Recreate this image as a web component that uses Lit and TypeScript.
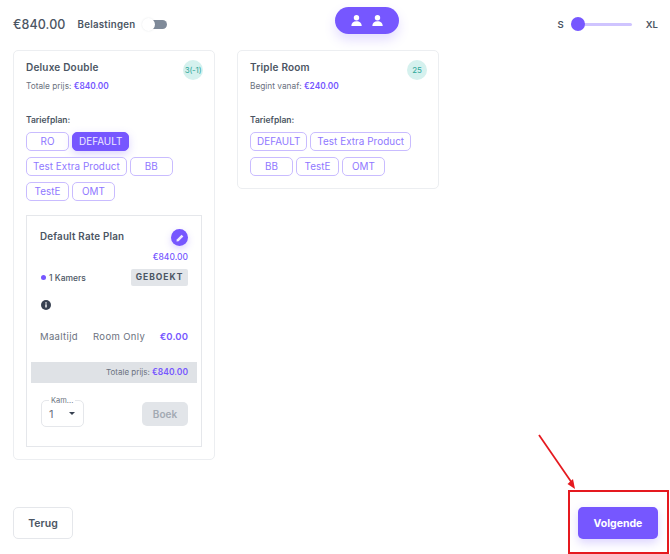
import { LitElement, html, css, svg } from 'lit';
import { customElement } from 'lit/decorators.js';

const personIcon = svg`<circle cx="5.500" cy="2.800" r="2.700"/><path d="M.3 11c0-3 2.100-4.700 5.200-4.700s5.200 1.700 5.200 4.700z"/>`;

@customElement('room-card')
export class RoomCard extends LitElement {
  static properties = {
    name: { type: String },
    label: { type: String },
    price: { type: String },
    badge: { type: String },
    plans: { type: Array },
    active: { type: String },
  };

  name = '';
  label = '';
  price = '';
  badge = '';
  plans: string[] = [];
  active = '';

  static styles = css`
    :host {
      display: block;
      width: 202px;
      box-sizing: border-box;
      border: 1px solid #eceef1;
      border-radius: 5px;
      background: #fff;
      padding: 9px 12px 12px;
    }
    .top {
      display: flex;
      justify-content: space-between;
      align-items: flex-start;
    }
    .name {
      font-size: 10px;
      font-weight: 600;
      color: #4b5563;
      line-height: 14px;
      letter-spacing: 0.2px;
    }
    .badge {
      width: 20px;
      height: 20px;
      border-radius: 50%;
      background: #d5f1ee;
      color: #2fa89b;
      font-size: 8px;
      letter-spacing: -0.2px;
      display: flex;
      align-items: center;
      justify-content: center;
      margin-right: -1px;
      white-space: nowrap;
    }
    .total {
      font-size: 8.3px;
      line-height: 12px;
      color: #6b7280;
    }
    .total b {
      color: #7657ff;
      font-weight: 600;
    }
    .plan-label {
      font-size: 8.5px;
      font-weight: 600;
      color: #4b5563;
      line-height: 12px;
      margin-top: 22px;
      margin-bottom: 6px;
    }
    .plans {
      display: flex;
      flex-wrap: wrap;
      gap: 6px 3px;
    }
    .plan {
      box-sizing: border-box;
      min-width: 43px;
      height: 19px;
      padding: 0 6px;
      border: 1px solid #c9bcff;
      border-radius: 5px;
      background: #fff;
      color: #8f78ff;
      font: 400 9.9px/17px Inter, sans-serif;
      letter-spacing: 0.05px;
      text-align: center;
    }
    .plan.on {
      background: #7657ff;
      border-color: #7657ff;
      color: #eee9ff;
      box-shadow: 0 3px 8px rgba(118, 87, 255, 0.25);
    }
  `;

  render() {
    return html`
      <div class="top">
        <div class="name">${this.name}</div>
        <div class="badge">${this.badge}</div>
      </div>
      <div class="total">${this.label} <b>${this.price}</b></div>
      <div class="plan-label">Tariefplan:</div>
      <div class="plans">
        ${this.plans.map(
          (p) => html`<button class="plan ${p === this.active ? 'on' : ''}">${p}</button>`
        )}
      </div>
      <slot></slot>
    `;
  }
}

@customElement('rate-plan')
export class RatePlan extends LitElement {
  static styles = css`
    :host {
      display: block;
      box-sizing: border-box;
      height: 232px;
      margin-top: 14px;
      border: 1px solid #e5e7eb;
      background: #fff;
      padding: 13px 4px 0;
    }
    .inner {
      padding: 0 9px;
    }
    .head {
      display: flex;
      justify-content: space-between;
      align-items: flex-start;
    }
    .title {
      font-size: 9.8px;
      font-weight: 600;
      color: #4b5563;
      line-height: 14px;
      margin-top: 1px;
      letter-spacing: 0.2px;
    }
    .edit {
      width: 17px;
      height: 17px;
      border-radius: 50%;
      background: #7657ff;
      display: flex;
      align-items: center;
      justify-content: center;
      box-shadow: 0 3px 7px rgba(118, 87, 255, 0.25);
    }
    .edit svg {
      width: 8px;
      height: 8px;
      fill: #eee9ff;
    }
    .price {
      text-align: right;
      font-size: 8.5px;
      font-weight: 500;
      color: #7657ff;
      line-height: 12px;
      margin-top: 5px;
    }
    .rooms {
      display: flex;
      justify-content: space-between;
      align-items: center;
      margin-top: 6px;
    }
    .count {
      display: flex;
      align-items: center;
      gap: 3px;
      padding-left: 1px;
      font-size: 8.5px;
      font-weight: 500;
      color: #4b5563;
    }
    .dot {
      width: 5px;
      height: 5px;
      border-radius: 50%;
      background: #7657ff;
    }
    .booked {
      width: 57px;
      height: 17px;
      border-radius: 2px;
      background: #e2e5e9;
      color: #4b5563;
      font-size: 8.5px;
      font-weight: 700;
      letter-spacing: 1px;
      line-height: 17px;
      text-align: center;
    }
    .info {
      display: block;
      width: 10px;
      height: 10px;
      margin: 14px 0 0 1px;
    }
    .meal {
      display: flex;
      align-items: center;
      margin-top: 20px;
      font-size: 9.5px;
      color: #6b7280;
      letter-spacing: 0.35px;
      line-height: 14px;
    }
    .meal .plan-name {
      margin-left: 15px;
    }
    .meal b {
      margin-left: auto;
      color: #7657ff;
      font-size: 9.5px;
      font-weight: 600;
      letter-spacing: 0.1px;
    }
    .bar {
      height: 21px;
      margin-top: 18px;
      background: #dfe2e6;
      padding-right: 9px;
      text-align: right;
      font-size: 8px;
      line-height: 21px;
      color: #6b7280;
    }
    .bar b {
      color: #7657ff;
      font-size: 8.5px;
      font-weight: 600;
    }
    .actions {
      display: flex;
      justify-content: space-between;
      align-items: center;
      margin-top: 17px;
    }
    .select {
      position: relative;
      box-sizing: border-box;
      width: 43px;
      height: 27px;
      margin-left: 1px;
      border: 1px solid #e5e7eb;
      border-radius: 5px;
      display: flex;
      align-items: center;
      justify-content: space-between;
      padding: 0 8px 0 7px;
      color: #6b7280;
      font-size: 11px;
    }
    .select .legend {
      position: absolute;
      left: 7px;
      top: -5px;
      padding: 0 2px;
      background: #fff;
      font-size: 7.5px;
      line-height: 9px;
      color: #6b7280;
    }
    .caret {
      width: 0;
      height: 0;
      border-left: 3.5px solid transparent;
      border-right: 3.5px solid transparent;
      border-top: 3.5px solid #374151;
    }
    .book {
      width: 46px;
      height: 24px;
      border: 0;
      border-radius: 5px;
      background: #e2e5e9;
      color: #a3aab3;
      font: 600 10px Inter, sans-serif;
      padding: 0;
    }
  `;

  render() {
    return html`
      <div class="inner">
        <div class="head">
          <div class="title">Default Rate Plan</div>
          <div class="edit">
            <svg viewBox="0 0 10 10"><path d="M7 .8 9.2 3 3.2 9 .6 9.4 1 6.800z"/></svg>
          </div>
        </div>
        <div class="price">€840.00</div>
        <div class="rooms">
          <div class="count"><span class="dot"></span>1 Kamers</div>
          <div class="booked">GEBOEKT</div>
        </div>
        <svg class="info" viewBox="0 0 10 10">
          <circle cx="5" cy="5" r="5" fill="#374151"/>
          <rect x="4.300" y="4.300" width="1.400" height="3.200" fill="#fff"/>
          <rect x="4.300" y="2.300" width="1.400" height="1.300" fill="#fff"/>
        </svg>
        <div class="meal">
          <span>Maaltijd</span>
          <span class="plan-name">Room Only</span>
          <b>€0.00</b>
        </div>
      </div>
      <div class="bar">Totale prijs: <b>€840.00</b></div>
      <div class="inner actions">
        <div class="select">
          <span class="legend">Kam...</span>
          <span>1</span>
          <span class="caret"></span>
        </div>
        <button class="book">Boek</button>
      </div>
    `;
  }
}

@customElement('app-root')
export class AppRoot extends LitElement {
  static styles = css`
    :host {
      display: block;
      position: relative;
      width: 670px;
      height: 554px;
      overflow: hidden;
      background: #fff;
      font-family: Inter, "Noto Sans", sans-serif;
      color: #4b5563;
    }
    .header {
      display: grid;
      grid-template-columns: 322px 64px 1fr;
      align-items: center;
      height: 34px;
      padding: 7px 12px 0 13px;
    }
    .tax {
      display: flex;
      align-items: center;
    }
    .amount {
      font-size: 12.5px;
      font-weight: 500;
      letter-spacing: 0.1px;
      color: #4b5563;
    }
    .tax-label {
      margin-left: 12px;
      font-size: 9.7px;
      font-weight: 600;
      letter-spacing: 0.25px;
    }
    .switch {
      position: relative;
      width: 25px;
      height: 9px;
      margin-left: 7px;
    }
    .switch .track {
      position: absolute;
      right: 0;
      top: 0;
      width: 14px;
      height: 9px;
      border-radius: 0 5px 5px 0;
      background: #7f8a99;
    }
    .switch .knob {
      position: absolute;
      left: 0;
      top: -2px;
      width: 13px;
      height: 13px;
      border-radius: 50%;
      background: #fff;
      box-shadow: 0 0 2px rgba(75, 85, 99, 0.15);
    }
    .guests {
      align-self: start;
      display: flex;
      align-items: center;
      justify-content: center;
      gap: 10px;
      height: 27px;
      border-radius: 14px;
      background: #7657ff;
      box-shadow: 0 6px 12px rgba(118, 87, 255, 0.2);
    }
    .guests svg {
      width: 11px;
      height: 11px;
      fill: #fff;
    }
    .size {
      display: flex;
      align-items: center;
      justify-content: flex-end;
      font-size: 9.5px;
      font-weight: 600;
    }
    .slider {
      position: relative;
      width: 61px;
      height: 3px;
      margin: 0 14px 0 7px;
      border-radius: 2px;
      background: #cfc4ff;
    }
    .slider span {
      position: absolute;
      left: 0;
      top: -5.5px;
      width: 14px;
      height: 14px;
      border-radius: 50%;
      background: #7657ff;
    }
    .rooms {
      display: flex;
      align-items: flex-start;
      gap: 22px;
      padding: 9px 13px 0;
    }
    .footer {
      display: flex;
      justify-content: space-between;
      align-items: center;
      padding: 0 12px 0 13px;
      margin-top: 47px;
    }
    .back {
      box-sizing: border-box;
      width: 60px;
      height: 32px;
      border: 1px solid #e5e7eb;
      border-radius: 5px;
      background: #fff;
      color: #4b5563;
      font: 600 10.5px Inter, sans-serif;
      padding: 0;
    }
    .next {
      width: 80px;
      height: 32px;
      border: 0;
      border-radius: 5px;
      background: #7657ff;
      color: #fff;
      font: 700 10.5px Inter, sans-serif;
      padding: 0;
      box-shadow: 0 4px 10px rgba(118, 87, 255, 0.25);
    }
    .mark {
      position: absolute;
      left: 568px;
      top: 490px;
      box-sizing: border-box;
      width: 101px;
      height: 64px;
      border: 2px solid #e5191f;
    }
    .arrow {
      position: absolute;
      left: 535px;
      top: 430px;
      width: 45px;
      height: 62px;
    }
  `;

  render() {
    const plans = ['DEFAULT', 'Test Extra Product', 'BB', 'TestE', 'OMT'];
    return html`
      <div class="header">
        <div class="tax">
          <span class="amount">€840.00</span>
          <span class="tax-label">Belastingen</span>
          <span class="switch"><span class="track"></span><span class="knob"></span></span>
        </div>
        <div class="guests">
          <svg viewBox="0 0 11 11">${personIcon}</svg>
          <svg viewBox="0 0 11 11">${personIcon}</svg>
        </div>
        <div class="size">
          <span>S</span>
          <div class="slider"><span></span></div>
          <span>XL</span>
        </div>
      </div>
      <div class="rooms">
        <room-card
          name="Deluxe Double"
          label="Totale prijs:"
          price="€840.00"
          badge="3(-1)"
          active="DEFAULT"
          .plans=${['RO', ...plans]}
        >
          <rate-plan></rate-plan>
        </room-card>
        <room-card
          name="Triple Room"
          label="Begint vanaf:"
          price="€240.00"
          badge="25"
          .plans=${plans}
        ></room-card>
      </div>
      <div class="footer">
        <button class="back">Terug</button>
        <button class="next">Volgende</button>
      </div>
      <div class="mark"></div>
      <svg class="arrow" viewBox="0 0 45 62">
        <line x1="4" y1="5" x2="37" y2="53" stroke="#e5191f" stroke-width="1.800"/>
        <path d="M40 59 32.500 54 38 49z" fill="#e5191f"/>
      </svg>
    `;
  }
}
